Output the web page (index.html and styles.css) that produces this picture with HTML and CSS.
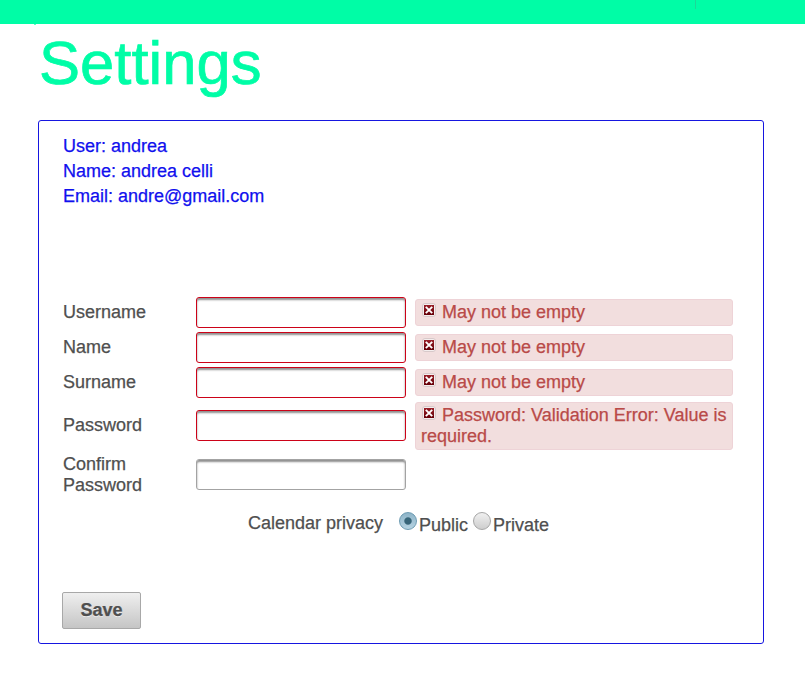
FILE: index.html
```html
<!DOCTYPE html>
<html lang="en">
<head>
<meta charset="utf-8">
<title>Settings</title>
<link rel="stylesheet" href="styles.css">
</head>
<body>
<svg class="symbols" aria-hidden="true">
  <defs>
    <linearGradient id="red" x1="0" y1="0" x2="0" y2="1"><stop offset="0" stop-color="#991f28"/><stop offset="1" stop-color="#650008"/></linearGradient>
    <symbol id="error" viewBox="0 0 16 16">
      <rect x="1.5" y="1.5" width="13" height="13" rx="2.5" fill="#f4eeee" stroke="#d8c9ca"/>
      <rect x="3" y="3" width="10" height="10" fill="url(#red)"/>
      <path d="M4.8 4.8l6.4 6.4M11.2 4.8l-6.4 6.4" stroke="#fff" stroke-width="1.9"/>
    </symbol>
  </defs>
</svg>
<header class="topbar"><span class="divider"></span><span class="notch"></span></header>
<main class="page">
  <h1 class="title">Settings</h1>
  <section class="card">
    <div class="profile">
      <div>User: andrea</div>
      <div>Name: andrea celli</div>
      <div>Email: andre@gmail.com</div>
    </div>
    <form class="form">
      <div class="row">
        <label for="username">Username</label>
        <input id="username" class="field invalid" type="text">
        <div class="message"><svg class="icon"><use href="#error"/></svg>May not be empty</div>
      </div>
      <div class="row">
        <label for="name">Name</label>
        <input id="name" class="field invalid" type="text">
        <div class="message"><svg class="icon"><use href="#error"/></svg>May not be empty</div>
      </div>
      <div class="row">
        <label for="surname">Surname</label>
        <input id="surname" class="field invalid" type="text">
        <div class="message"><svg class="icon"><use href="#error"/></svg>May not be empty</div>
      </div>
      <div class="row row-password">
        <label for="password">Password</label>
        <input id="password" class="field invalid" type="password">
        <div class="message"><svg class="icon"><use href="#error"/></svg>Password: Validation Error: Value is required.</div>
      </div>
      <div class="row row-confirm">
        <label for="confirm">Confirm Password</label>
        <input id="confirm" class="field" type="password">
      </div>
      <div class="privacy">
        <span class="privacy-label">Calendar privacy</span>
        <input id="public" class="radio" type="radio" name="privacy" checked>
        <label class="option" for="public">Public</label>
        <input id="private" class="radio" type="radio" name="privacy">
        <label class="option" for="private">Private</label>
      </div>
      <button class="save" type="button">Save</button>
    </form>
  </section>
</main>
</body>
</html>
```
FILE: styles.css
```css
* { box-sizing: border-box; }
body {
  margin: 0;
  background: #fff;
  color: #4f4f4f;
  font: 18px/21px "Liberation Sans", Arial, sans-serif;
  -webkit-text-stroke: .25px;
}
.symbols { position: absolute; width: 0; height: 0; }
.topbar { position: relative; height: 24px; background: #00fda6; }
.divider { position: absolute; left: 695px; top: 0; width: 1px; height: 9px; background: #1cd898; }
.notch { position: absolute; left: 34px; top: 24px; width: 2px; height: 1px; background: #5dffc6; }
.page { padding: 0 41px 0 38px; }
.title {
  height: 96px;
  margin: 0;
  padding: 3px 0 0 1px;
  color: #00fda6;
  font-size: 61.6px;
  font-weight: 400;
  line-height: 72px;
  -webkit-text-stroke: .7px;
}
.card {
  height: 524px;
  padding: 13px 24px 0;
  border: 1px solid #1616e0;
  border-radius: 3px;
}
.profile { height: 161px; color: #1010ee; line-height: 25px; }
.row {
  display: grid;
  grid-template-columns: 133px 210px 318px;
  align-items: center;
  height: 35px;
}
.row-password { height: 52px; }
.row-password label, .row-password .field { margin-bottom: 2px; }
.row-confirm { height: 45px; }
.row label { padding-right: 40px; }
.field {
  width: 210px;
  height: 31px;
  margin: 0;
  padding: 4px;
  border: 1px solid #a3a3a3;
  border-radius: 3px;
  outline: 0;
  background: #fff;
  box-shadow: inset 0 2px 2px #8f8f8f;
  font: inherit;
}
.invalid { border-color: #cc0218; }
.message {
  width: 318px;
  margin-left: 9px;
  padding: 2px 5px;
  border: 1px solid #eed3d7;
  border-radius: 3px;
  background: #f2dede;
  color: #b94a48;
}
.icon { width: 16px; height: 16px; margin-right: 5px; vertical-align: 0; }
.privacy { display: flex; align-items: flex-start; height: 95px; padding: 15px 0 0 185px; }
.privacy-label { width: 151px; margin-top: 1px; }
.radio {
  appearance: none;
  width: 18px;
  height: 18px;
  margin: 0;
  border: 1px solid #a6a6a6;
  border-radius: 50%;
  background: linear-gradient(#f0f0f0, #cecece);
}
.radio:checked {
  border-color: #6c9bb2;
  background: radial-gradient(circle, #376579 3.2px, transparent 4.2px), linear-gradient(#8eb4c8, #b5d3e2);
}
.option { margin: 3px 5px 0 2px; }
.save {
  display: block;
  width: 79px;
  height: 37px;
  margin-left: -1px;
  padding: 0 0 1px;
  border: 1px solid #a8a8a8;
  border-radius: 2px;
  background: linear-gradient(#efefef, #c5c5c5);
  color: #4f4f4f;
  font: bold 18px/21px "Liberation Sans", Arial, sans-serif;
  text-shadow: 0 1px 0 rgba(255, 255, 255, .7);
}
```
